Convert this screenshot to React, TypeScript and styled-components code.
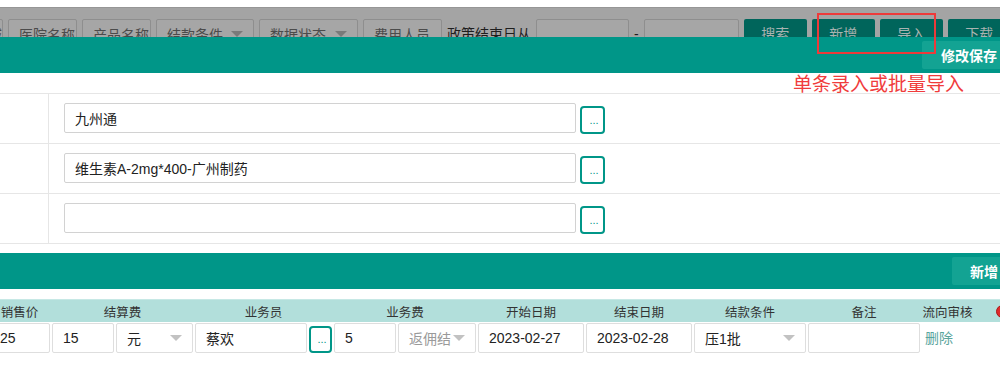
import React from "react";
import styled, { createGlobalStyle } from "styled-components";

const FONT = `"Liberation Sans", "Noto Sans CJK SC", sans-serif`;

const GlobalStyle = createGlobalStyle`
  html, body { margin: 0; padding: 0; background: #fff; }
  body { overflow: hidden; font-family: ${FONT}; }
  * { box-sizing: border-box; }
`;

const Page = styled.div`
  position: relative;
  width: 1000px;
  height: 365px;
  overflow: hidden;
  background: #fff;
  font-family: ${FONT};
  padding-top: 7px;
`;

/* ---------- dimmed toolbar behind the modal ---------- */
const Toolbar = styled.div`
  display: flex;
  align-items: flex-start;
  gap: 5px;
  height: 30px;
  padding-top: 11px;
  border-top: 1px solid #969696;
  background: #a4a4a4;
  overflow: hidden;
`;

const ToolField = styled.div<{ $w: number; $lead?: number }>`
  flex: 0 0 ${(p) => p.$w}px;
  min-width: 0;
  margin-left: ${(p) => p.$lead ?? 0}px;
  height: 30px;
  display: flex;
  align-items: center;
  justify-content: space-between;
  padding: 0 10px;
  border: 1px solid #8e8e8e;
  border-radius: 2px;
  background: #a6a6a6;
  color: #4b4b4b;
  font-size: 14px;
  white-space: nowrap;
  overflow: hidden;
`;

const ToolCaret = styled.span`
  flex: 0 0 auto;
  width: 0;
  height: 0;
  border-left: 6px solid transparent;
  border-right: 6px solid transparent;
  border-top: 6px solid #7a7a7a;
`;

const ToolLabel = styled.span`
  flex: 0 0 auto;
  font-size: 14px;
  line-height: 30px;
  color: #1e1e1e;
  white-space: nowrap;
`;

const ToolDash = styled.span`
  flex: 0 0 3px;
  font-size: 14px;
  line-height: 30px;
  color: #1e1e1e;
`;

const ToolButton = styled.div<{ $w: number }>`
  flex: 0 0 ${(p) => p.$w}px;
  min-width: 0;
  height: 30px;
  line-height: 30px;
  text-align: center;
  border-radius: 2px;
  background: #00655b;
  color: #a9b3b1;
  font-size: 14px;
  white-space: nowrap;
`;

/* ---------- modal ---------- */
const Modal = styled.div`
  margin-right: -16px;
  background: #fff;
`;

const TealBar = styled.div<{ $gap?: number }>`
  height: 36px;
  margin-top: ${(p) => p.$gap ?? 0}px;
  background: #009688;
  display: flex;
  justify-content: flex-end;
  align-items: flex-start;
  padding-top: 4px;
`;

const BarButton = styled.button<{ $pad: number }>`
  height: 28px;
  padding: 0 ${(p) => p.$pad}px;
  border: none;
  border-radius: 2px;
  background: #13a393;
  color: #fff;
  font-family: ${FONT};
  font-size: 14px;
  font-weight: bold;
  white-space: nowrap;
`;

const FormTable = styled.div`
  margin-top: 20px;
  border-top: 1px solid #e6e6e6;
`;

const FormRow = styled.div`
  display: flex;
  height: 50px;
  border-bottom: 1px solid #e6e6e6;
`;

const LabelCell = styled.div`
  flex: 0 0 49px;
  border-right: 1px solid #e6e6e6;
`;

const FieldCell = styled.div`
  display: flex;
  align-items: flex-start;
  gap: 4px;
  padding: 9px 0 0 15px;
`;

const TextInput = styled.input<{ $w?: number }>`
  flex: ${(p) => (p.$w ? `0 0 ${p.$w}px` : "1 1 0")};
  min-width: 0;
  height: 30px;
  padding: 0 10px;
  border: 1px solid #d2d2d2;
  border-radius: 2px;
  background: #fff;
  color: #222;
  font-family: ${FONT};
  font-size: 14px;
  outline: none;
`;

const CellInput = styled(TextInput)`
  border-color: #dedede;
`;

const PickButton = styled.button<{ $w: number; $h: number }>`
  flex: 0 0 ${(p) => p.$w}px;
  height: ${(p) => p.$h}px;
  margin-top: 3px;
  padding: 0 0 0 3px;
  border: 2px solid #009688;
  border-radius: 4px;
  background: #fff;
  color: #009688;
  font-family: ${FONT};
  font-size: 11px;
  line-height: 1;
  display: flex;
  align-items: center;
  justify-content: center;
`;

const DetailGrid = styled.div`
  margin-top: 10px;
  margin-left: -12px;
  display: grid;
  grid-template-columns: 63px 143px 139px 144px 108px 108px 114px 114px 53px 1fr;
`;

const HeadCell = styled.div<{ $start?: boolean }>`
  height: 23px;
  background: #b2dfdb;
  border-top: 1px solid #c6e8e5;
  display: flex;
  align-items: center;
  justify-content: ${(p) => (p.$start ? "flex-start" : "center")};
  padding-left: ${(p) => (p.$start ? "22px" : "0")};
  color: #333;
  font-size: 12.5px;
  white-space: nowrap;
`;

const BodyCell = styled.div`
  display: flex;
  align-items: flex-start;
  gap: 2px;
  padding: 1px 1px 0;
  min-width: 0;
`;

const SelectBox = styled.div<{ $muted?: boolean }>`
  flex: 1 1 0;
  min-width: 0;
  height: 30px;
  display: flex;
  align-items: center;
  justify-content: space-between;
  padding: 0 10px;
  border: 1px solid #dedede;
  border-radius: 2px;
  background: #fff;
  color: ${(p) => (p.$muted ? "#9a9a9a" : "#222")};
  font-size: 14px;
  white-space: nowrap;
`;

const Caret = styled.span`
  flex: 0 0 auto;
  width: 0;
  height: 0;
  border-left: 6px solid transparent;
  border-right: 6px solid transparent;
  border-top: 6px solid #c2c2c2;
`;

const DeleteLink = styled.span`
  padding-left: 3px;
  line-height: 30px;
  font-size: 14px;
  color: #5aa59d;
`;

const RedDot = styled.span`
  width: 13px;
  height: 13px;
  border-radius: 50%;
  background: #e02b2b;
  border: 1px solid #a81818;
`;

/* ---------- annotation overlay ---------- */
const AnnotBox = styled.div`
  position: absolute;
  left: 817px;
  top: 13px;
  width: 119px;
  height: 41px;
  border: 2px solid #ee3a3a;
`;

const AnnotText = styled.div`
  position: absolute;
  left: 793px;
  top: 75px;
  font-family: ${FONT};
  font-size: 19px;
  line-height: 1;
  color: #f03c3c;
  white-space: nowrap;
`;

const formRows = ["九州通", "维生素A-2mg*400-广州制药", ""];

export default function App() {
  return (
    <>
      <GlobalStyle />
      <Page>
        <Toolbar>
          <ToolField $w={68} $lead={-65}>所属区域</ToolField>
          <ToolField $w={69}>医院名称</ToolField>
          <ToolField $w={69}>产品名称</ToolField>
          <ToolField $w={98}>
            结款条件
            <ToolCaret />
          </ToolField>
          <ToolField $w={99}>
            数据状态
            <ToolCaret />
          </ToolField>
          <ToolField $w={79}>费用人员</ToolField>
          <ToolLabel>政策结束日从</ToolLabel>
          <ToolField $w={93} />
          <ToolDash>-</ToolDash>
          <ToolField $w={95} />
          <ToolButton $w={63}>搜索</ToolButton>
          <ToolButton $w={63}>新增</ToolButton>
          <ToolButton $w={63}>导入</ToolButton>
          <ToolButton $w={63}>下载</ToolButton>
        </Toolbar>

        <Modal>
          <TealBar>
            <BarButton $pad={19}>修改保存</BarButton>
          </TealBar>

          <FormTable>
            {formRows.map((v, i) => (
              <FormRow key={i}>
                <LabelCell />
                <FieldCell>
                  <TextInput $w={512} value={v} readOnly />
                  <PickButton $w={25} $h={28}>...</PickButton>
                </FieldCell>
              </FormRow>
            ))}
          </FormTable>

          <TealBar $gap={9}>
            <BarButton $pad={18}>新增</BarButton>
          </TealBar>

          <DetailGrid>
            <HeadCell>销售价</HeadCell>
            <HeadCell>结算费</HeadCell>
            <HeadCell>业务员</HeadCell>
            <HeadCell>业务费</HeadCell>
            <HeadCell>开始日期</HeadCell>
            <HeadCell>结束日期</HeadCell>
            <HeadCell>结款条件</HeadCell>
            <HeadCell>备注</HeadCell>
            <HeadCell>流向审核</HeadCell>
            <HeadCell $start>
              <RedDot />
            </HeadCell>

            <BodyCell>
              <CellInput value="25" readOnly />
            </BodyCell>
            <BodyCell>
              <CellInput $w={62} value="15" readOnly />
              <SelectBox>
                元<Caret />
              </SelectBox>
            </BodyCell>
            <BodyCell>
              <CellInput $w={112} value="蔡欢" readOnly />
              <PickButton $w={23} $h={27}>...</PickButton>
            </BodyCell>
            <BodyCell>
              <CellInput $w={62} value="5" readOnly />
              <SelectBox $muted>
                返佣结<Caret />
              </SelectBox>
            </BodyCell>
            <BodyCell>
              <CellInput value="2023-02-27" readOnly />
            </BodyCell>
            <BodyCell>
              <CellInput value="2023-02-28" readOnly />
            </BodyCell>
            <BodyCell>
              <SelectBox>
                压1批<Caret />
              </SelectBox>
            </BodyCell>
            <BodyCell>
              <CellInput value="" readOnly />
            </BodyCell>
            <BodyCell>
              <DeleteLink>删除</DeleteLink>
            </BodyCell>
            <BodyCell />
          </DetailGrid>
        </Modal>

        <AnnotBox />
        <AnnotText>单条录入或批量导入</AnnotText>
      </Page>
    </>
  );
}
